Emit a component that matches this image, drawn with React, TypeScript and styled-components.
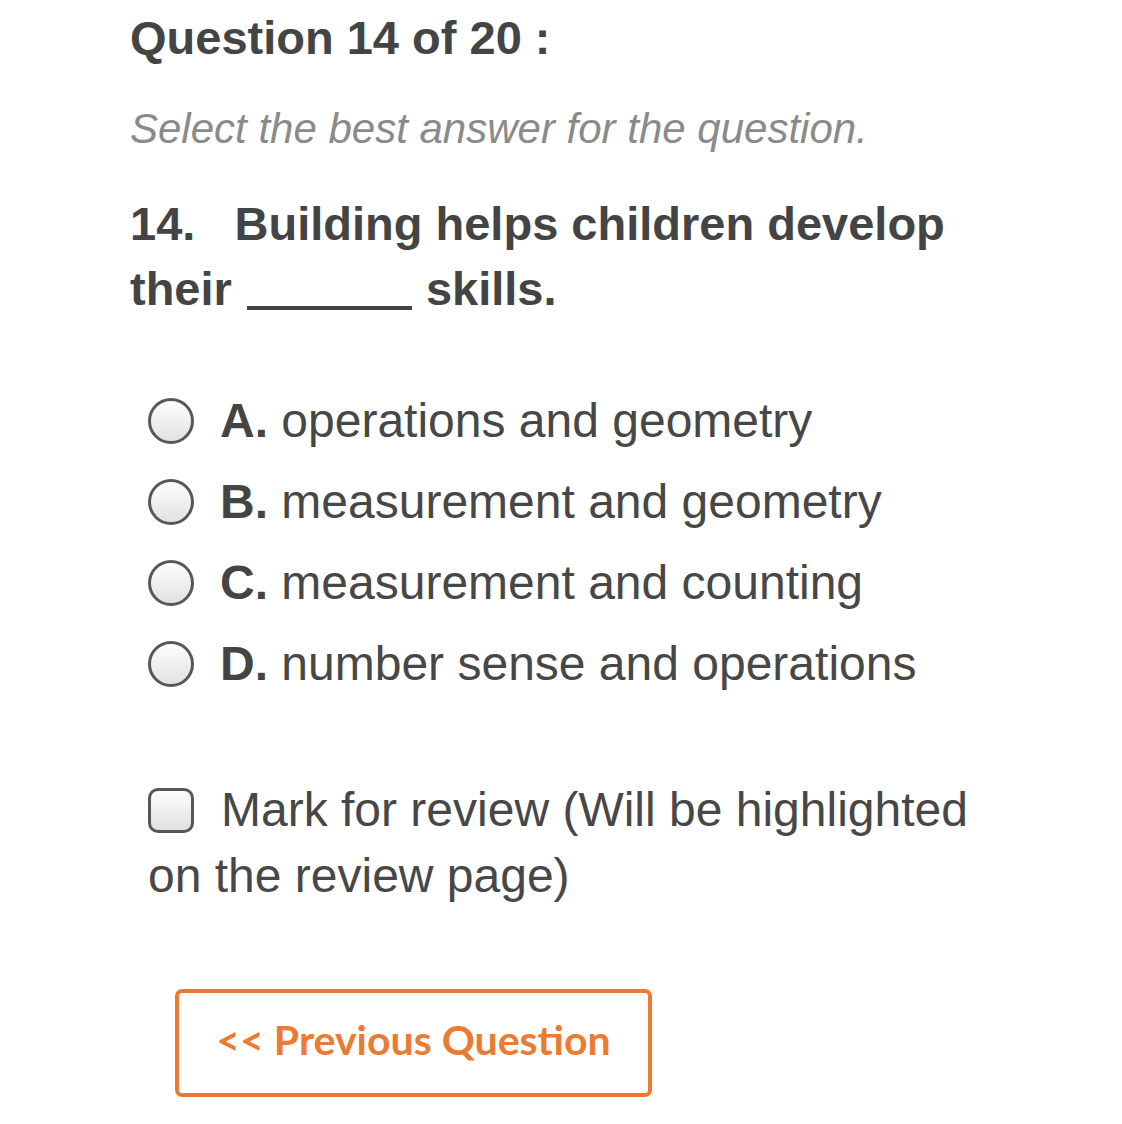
import { FC } from "react";
import styled, { createGlobalStyle } from "styled-components";

const GlobalStyle = createGlobalStyle`
	html, body {
		margin: 0;
		padding: 0;
		background-color: #fff;
	}
	body {
		font-family: "Liberation Sans", Arial, Helvetica, sans-serif;
		color: #464646;
	}
`;

const Page = styled.main`
	display: flex;
	flex-direction: column;
	align-items: flex-start;
	padding: 11px 0 30px 130px;
`;

const Title = styled.h1`
	margin: 0;
	font-size: 47px;
	line-height: 53px;
	font-weight: 700;
	color: #444;
`;

const Instruction = styled.p`
	margin: 41px 0 0;
	font-size: 42px;
	line-height: 48px;
	font-style: italic;
	color: #8a8a8a;
`;

const Question = styled.h2`
	margin: 38px 0 0;
	width: 860px;
	font-size: 47px;
	line-height: 65px;
	font-weight: 700;
	color: #444;
`;

const Blank = styled.span`
	display: inline-block;
	width: 165px;
	height: 4px;
	margin: 0 14px 0 2px;
	vertical-align: -5px;
	background-color: #444;
`;

const Options = styled.ul`
	list-style: none;
	margin: 59px 0 0;
	padding: 0 0 0 18px;
`;

const Option = styled.li`
	display: flex;
	align-items: center;
	gap: 26px;
	height: 81px;
	font-size: 48px;
	line-height: 81px;
	color: #474747;
`;

const Radio = styled.span`
	flex: none;
	width: 46px;
	height: 46px;
	box-sizing: border-box;
	border: 3px solid #575757;
	border-radius: 50%;
	background: linear-gradient(180deg, #fdfdfd 0%, #e2e2e2 100%);
`;

const Letter = styled.b`
	font-weight: 700;
	color: #444;
`;

const Review = styled.p`
	margin: 73px 0 0 18px;
	width: 850px;
	font-size: 48px;
	line-height: 66px;
	color: #474747;
`;

const Checkbox = styled.span`
	display: inline-block;
	width: 46px;
	height: 45px;
	box-sizing: border-box;
	margin-right: 27px;
	vertical-align: -7px;
	border: 3px solid #575757;
	border-radius: 10px;
	background: linear-gradient(180deg, #fdfdfd 0%, #e0e0e0 100%);
`;

const PrevButton = styled.button`
	margin: 80px 0 0 45px;
	width: 477px;
	height: 108px;
	box-sizing: border-box;
	padding: 0 0 6px;
	border: 4px solid #ec7a30;
	border-radius: 7px;
	background-color: #fff;
	color: #ec7a30;
	font-family: Lato, "Open Sans", sans-serif;
	font-size: 41px;
	line-height: 50px;
	font-weight: 700;
	cursor: pointer;
`;

const answers = [
	{ letter: "A.", text: "operations and geometry" },
	{ letter: "B.", text: "measurement and geometry" },
	{ letter: "C.", text: "measurement and counting" },
	{ letter: "D.", text: "number sense and operations" },
];

const App: FC = () => {
	return (
		<>
			<GlobalStyle />
			<Page>
				<Title>Question 14 of 20 :</Title>
				<Instruction>Select the best answer for the question.</Instruction>
				<Question>
					{"14.\u00a0\u00a0 Building helps children develop"}
					<br />
					{"their "}
					<Blank />
					skills.
				</Question>
				<Options>
					{answers.map((a) => (
						<Option key={a.letter}>
							<Radio />
							<span>
								<Letter>{a.letter}</Letter> {a.text}
							</span>
						</Option>
					))}
				</Options>
				<Review>
					<Checkbox />Mark for review (Will be highlighted on the review page)
				</Review>
				<PrevButton>&lt;&lt; Previous Question</PrevButton>
			</Page>
		</>
	);
};

export default App;
